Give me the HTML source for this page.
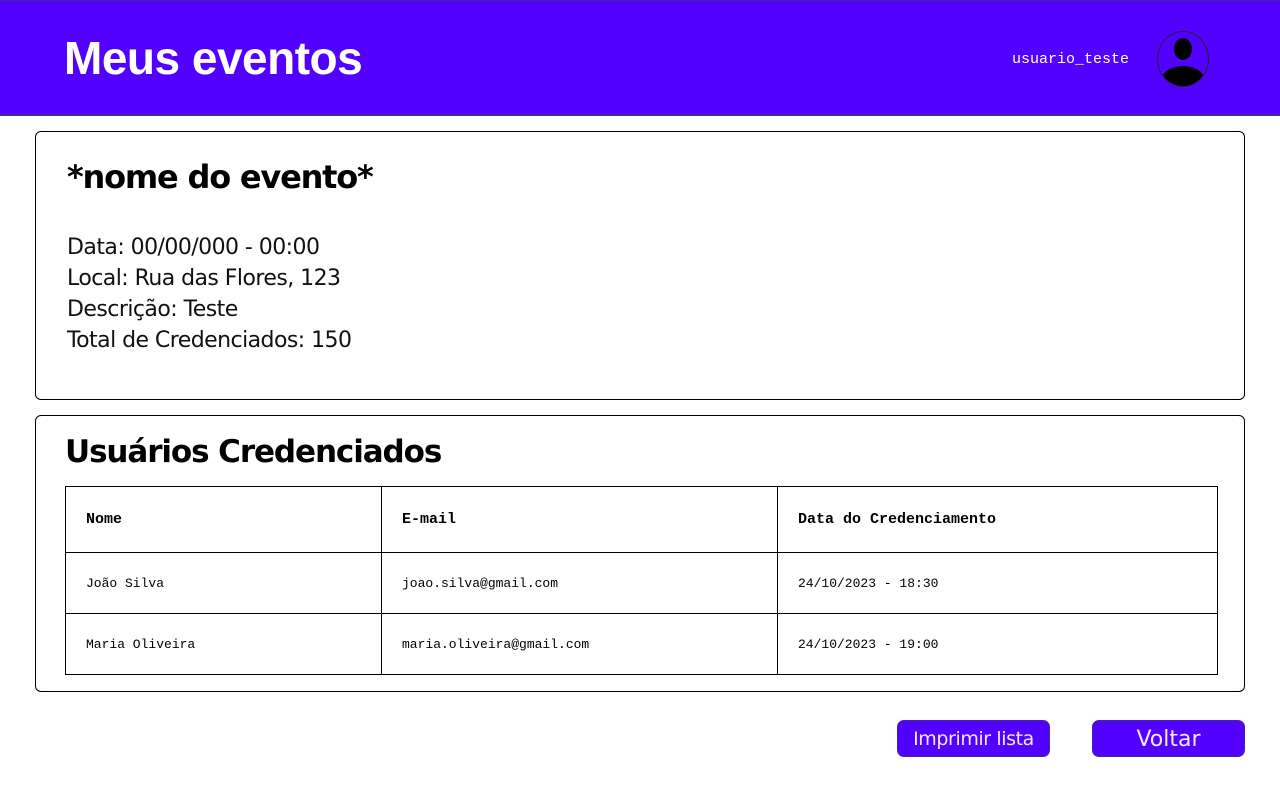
<!DOCTYPE html>
<html><head><meta charset="utf-8"><style>
body{margin:0;width:1280px;height:800px;background:#fff;position:relative;font-family:"DejaVu Sans","Liberation Sans",sans-serif;overflow:hidden}
.hdr{position:absolute;left:0;top:0;width:1280px;height:116px;background:#5200ff;border-top:1px solid #3a2a9a;border-bottom:2px solid #3a2a9a;box-sizing:border-box}
.hdr h1{position:absolute;left:64px;top:30px;margin:0;font:bold 46px "Liberation Sans",sans-serif;color:#fff;letter-spacing:-0.5px}
.user{position:absolute;left:1012px;top:50px;font:15px "Liberation Mono",monospace;color:#fff}
.av{position:absolute;left:1157px;top:30px;width:50px;height:54px;border:1px solid #222;border-radius:50%;overflow:hidden}
.card{position:absolute;left:35px;width:1210px;border:1px solid #000;border-radius:6px;box-sizing:border-box}
h2{margin:0;position:absolute;font-weight:bold;font-size:32px;color:#000}
.info{position:absolute;left:31px;top:100px;font-size:22px;line-height:31px;color:#111;letter-spacing:-0.55px}
table{position:absolute;left:29px;top:70px;border-collapse:collapse;font-family:"Liberation Mono",monospace;font-size:13px}
td,th{border:1px solid #000;text-align:left;padding:0 20px}
th{height:65px;font-size:15px}
td{height:60px}
.btn{position:absolute;top:720px;height:37px;background:#5200ff;border:1px solid #3a2a9a;border-radius:7px;color:#f4e8ff;text-align:center;box-sizing:border-box}
</style></head><body>
<div class="hdr"><h1>Meus eventos</h1><div class="user">usuario_teste</div>
<div class="av"><svg width="50" height="54"><ellipse cx="25" cy="17" rx="9" ry="11"/><ellipse cx="25" cy="47" rx="21" ry="13"/></svg></div></div>
<div class="card" style="top:131px;height:269px"><h2 style="left:31px;top:26px;letter-spacing:-1.2px">*nome do evento*</h2>
<div class="info">Data: 00/00/000 - 00:00<br>Local: Rua das Flores, 123<br>Descrição: Teste<br>Total de Credenciados: 150</div></div>
<div class="card" style="top:415px;height:277px"><h2 style="left:29px;top:18px;font-size:31px;letter-spacing:-1.1px">Usuários Credenciados</h2>
<table><tr><th style="width:275px">Nome</th><th style="width:355px">E-mail</th><th style="width:399px">Data do Credenciamento</th></tr>
<tr><td>João Silva</td><td>joao.silva@gmail.com</td><td>24/10/2023 - 18:30</td></tr>
<tr><td>Maria Oliveira</td><td>maria.oliveira@gmail.com</td><td>24/10/2023 - 19:00</td></tr></table></div>
<div class="btn" style="left:897px;width:153px;font-size:19px;line-height:37px;letter-spacing:-0.4px">Imprimir lista</div>
<div class="btn" style="left:1092px;width:153px;font-size:22px;line-height:37px">Voltar</div>
</body></html>
